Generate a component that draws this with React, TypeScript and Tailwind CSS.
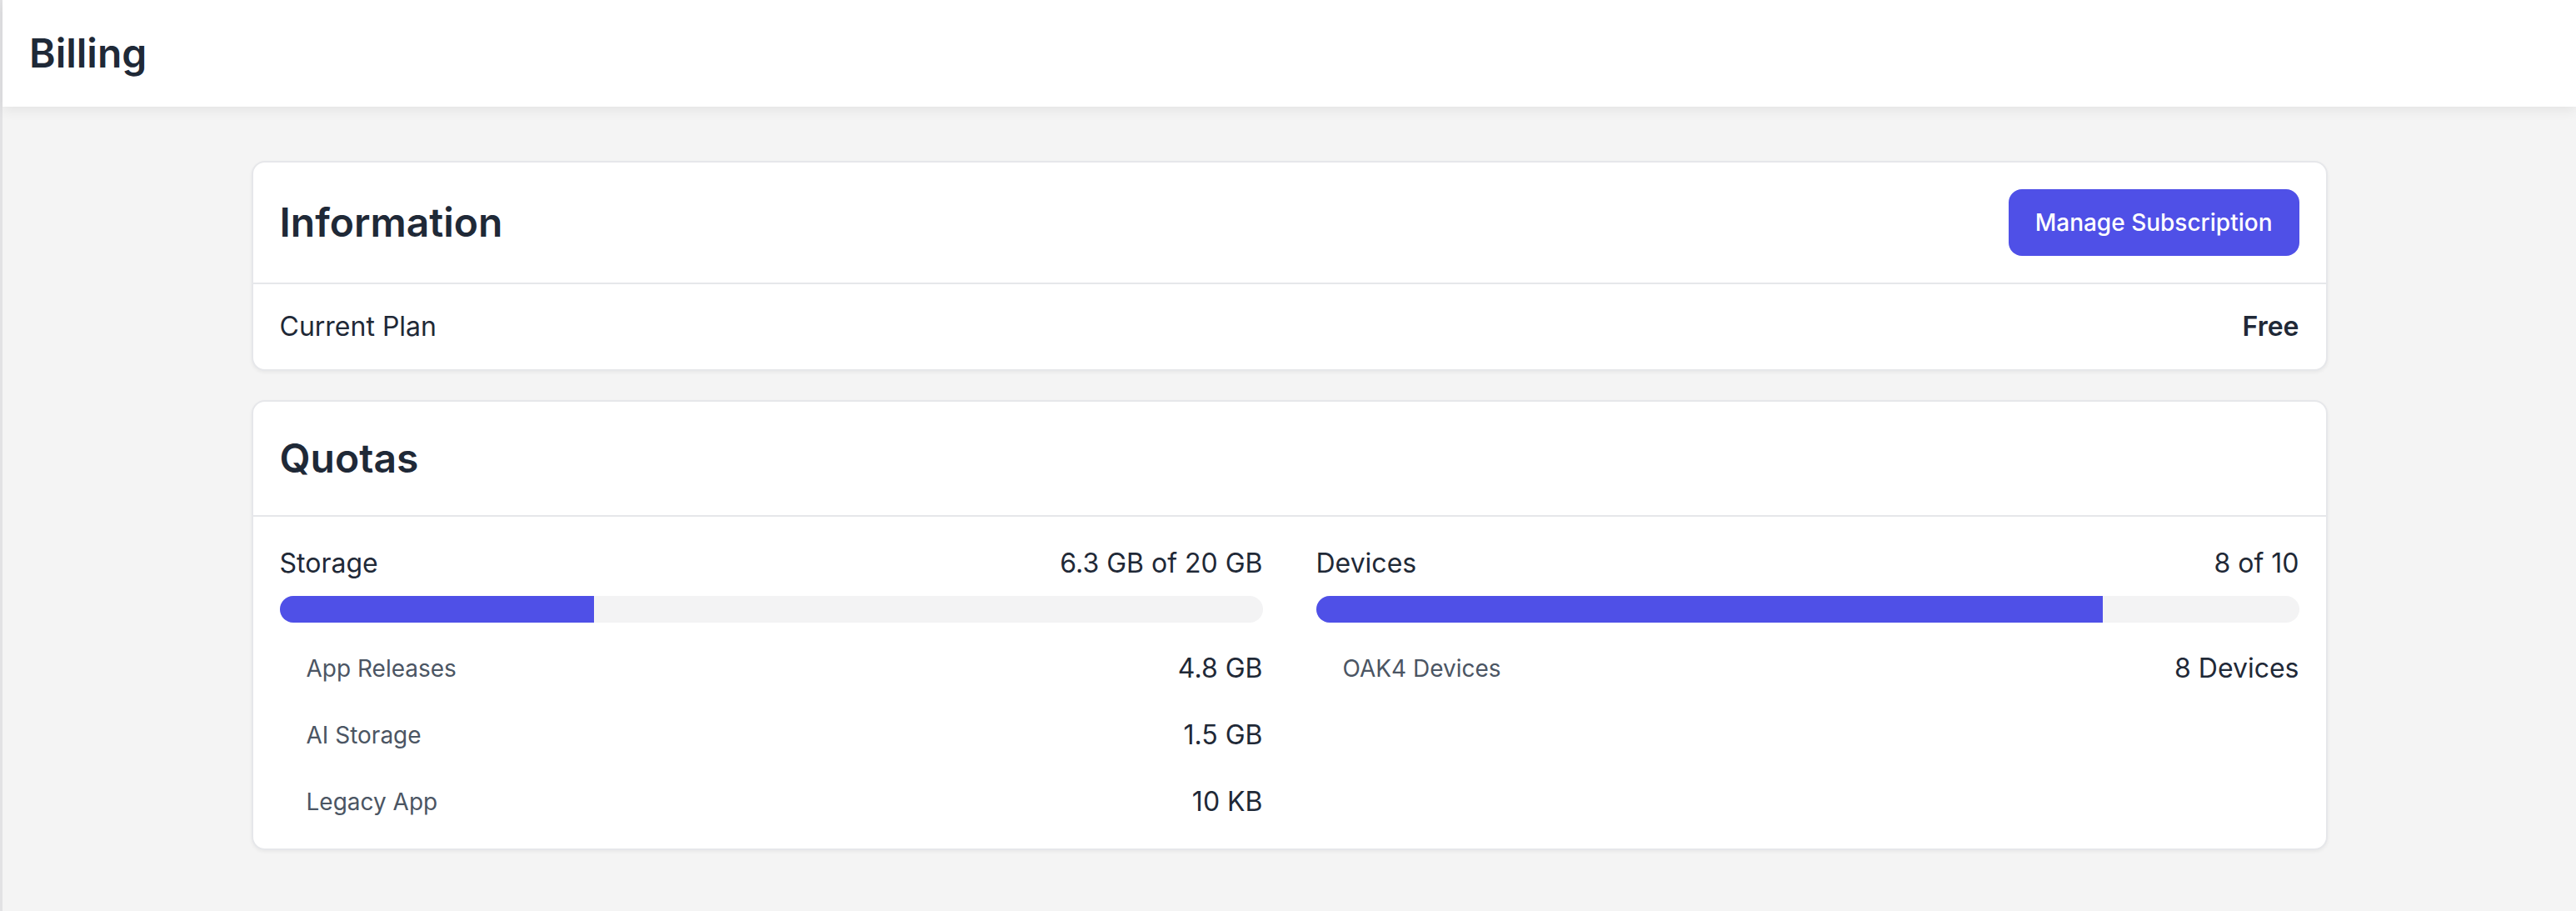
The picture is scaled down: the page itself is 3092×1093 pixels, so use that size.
import React from "react";

type UsageRow = { label: string; value: string };

type Quota = {
  name: string;
  summary: string;
  percent: number;
  rows: UsageRow[];
};

const quotas: Quota[] = [
  {
    name: "Storage",
    summary: "6.3 GB of 20 GB",
    percent: 32,
    rows: [
      { label: "App Releases", value: "4.8 GB" },
      { label: "AI Storage", value: "1.5 GB" },
      { label: "Legacy App", value: "10 KB" },
    ],
  },
  {
    name: "Devices",
    summary: "8 of 10",
    percent: 80,
    rows: [{ label: "OAK4 Devices", value: "8 Devices" }],
  },
];

function Card({ children }: { children: React.ReactNode }) {
  return (
    <section className="bg-white border-2 border-[#e6e7ea] rounded-[16px] shadow-[0_2px_4px_rgba(0,0,0,0.05)]">
      {children}
    </section>
  );
}

function QuotaColumn({ quota }: { quota: Quota }) {
  return (
    <div>
      <div className="flex items-center justify-between text-[32px] leading-[48px]">
        <span>{quota.name}</span>
        <span>{quota.summary}</span>
      </div>
      {/* usage bar */}
      <div className="mt-[15px] h-8 w-full rounded-full bg-[#f3f3f4] overflow-hidden">
        <div className="h-full bg-[#4f50e7]" style={{ width: `${quota.percent}%` }} />
      </div>
      <ul className="mt-[15px]">
        {quota.rows.map((row) => (
          <li key={row.label} className="flex items-center justify-between h-[80px] pl-8">
            <span className="text-[28px] text-[#4b5563]">{row.label}</span>
            <span className="text-[32px]">{row.value}</span>
          </li>
        ))}
      </ul>
    </div>
  );
}

export default function App() {
  return (
    <div className="min-h-screen bg-[#f4f4f4] border-l-[3px] border-[#e2e2e4] text-[#1f2937] font-['Inter',sans-serif]">
      {/* top bar */}
      <header className="relative h-[128px] bg-white flex items-center px-8 shadow-[0_4px_14px_rgba(0,0,0,0.07)]">
        <h1 className="text-[48px] leading-none font-semibold">Billing</h1>
      </header>

      <main className="px-8 pt-[65px] pb-[64px]">
        <div className="mx-auto max-w-[2492px] flex flex-col gap-[35px]">
          <Card>
            <div className="flex items-center justify-between p-8 border-b-2 border-[#e6e7ea]">
              <h2 className="text-[48px] leading-[72px] font-semibold">Information</h2>
              <button className="h-[80px] px-8 rounded-[16px] bg-[#4f50e7] text-white text-[28px] font-medium">
                Manage Subscription
              </button>
            </div>
            <div className="flex items-center justify-between px-8 py-[27px] text-[32px] leading-[48px]">
              <span>Current Plan</span>
              <span className="font-semibold">Free</span>
            </div>
          </Card>

          <Card>
            <div className="p-8 border-b-2 border-[#e6e7ea]">
              <h2 className="text-[48px] leading-[72px] font-semibold">Quotas</h2>
            </div>
            <div className="grid grid-cols-2 gap-16 px-8 pt-8 pb-4">
              {quotas.map((q) => (
                <QuotaColumn key={q.name} quota={q} />
              ))}
            </div>
          </Card>
        </div>
      </main>
    </div>
  );
}
